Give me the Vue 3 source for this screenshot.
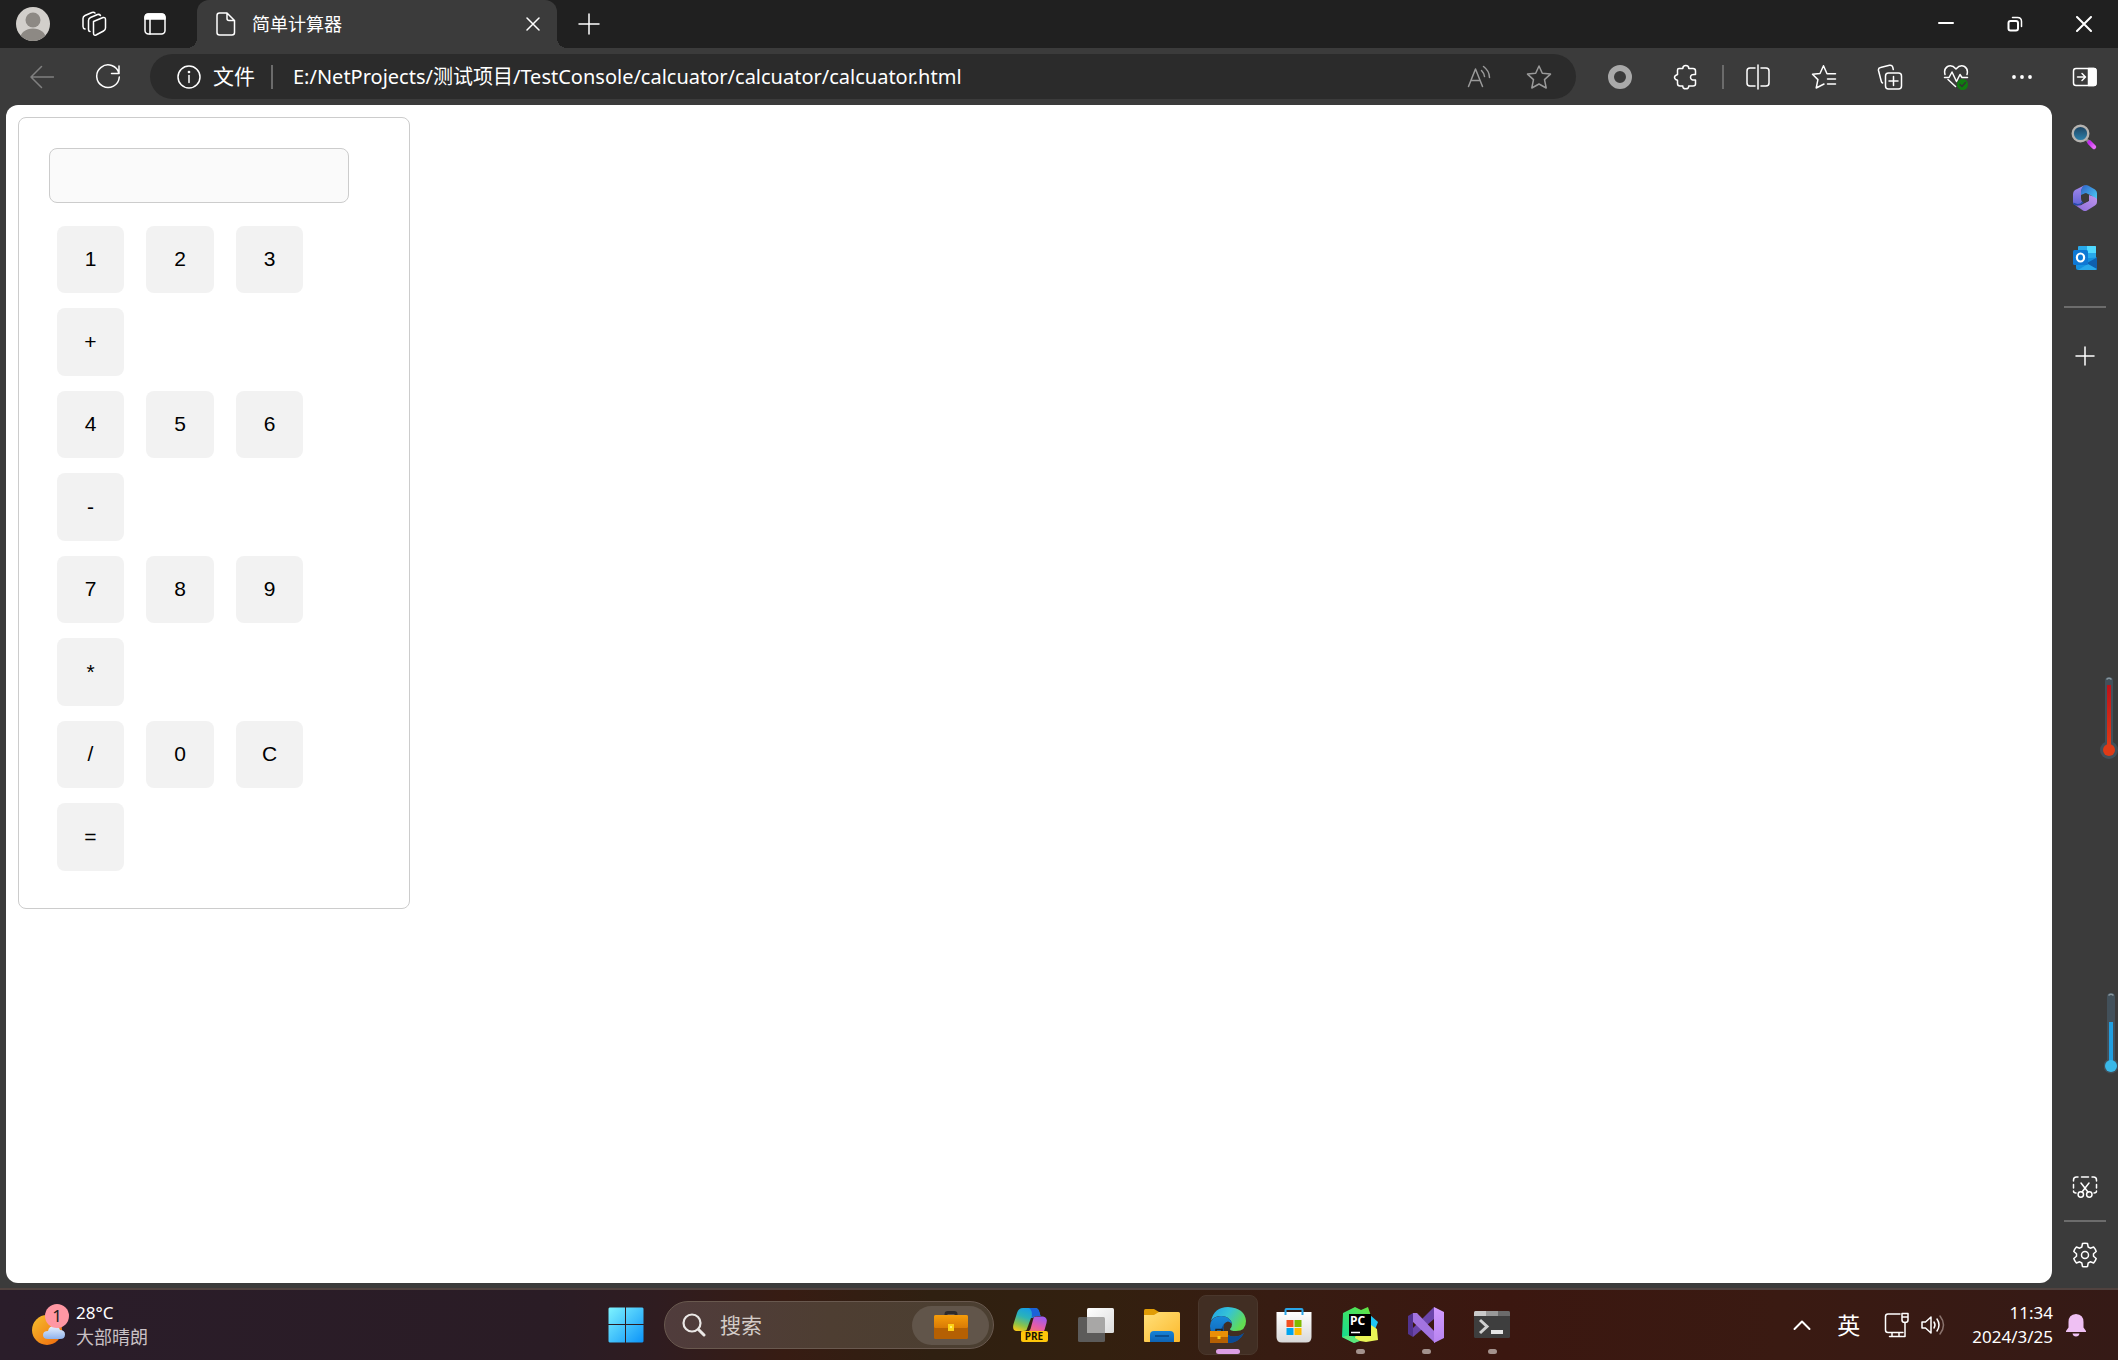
<script setup>
import { ref } from 'vue'

const display = ref('')
const address = ref('E:/NetProjects/测试项目/TestConsole/calcuator/calcuator/calcuator.html')

const rows = [
  ['1', '2', '3'], ['+'],
  ['4', '5', '6'], ['-'],
  ['7', '8', '9'], ['*'],
  ['/', '0', 'C'], ['='],
]

function calculate(text) {
  const match = text.match(/^(-?[\d.]+)([-+*/])(-?[\d.]+)$/)
  if (!match) return text
  const a = Number(match[1])
  const b = Number(match[3])
  return String({ '+': a + b, '-': a - b, '*': a * b, '/': a / b }[match[2]])
}

function press(key) {
  if (key === 'C') display.value = ''
  else if (key === '=') display.value = calculate(display.value)
  else display.value += key
}
</script>

<template>
  <div class="screen">
    <header class="titlebar">
      <div class="title-tools">
        <button class="tool" aria-label="个人资料">
          <svg width="34" height="34" viewBox="0 0 34 34">
            <defs><clipPath id="face"><circle cx="17" cy="17" r="17" /></clipPath></defs>
            <g clip-path="url(#face)"><rect width="34" height="34" fill="#d2cfcb" /><circle cx="17" cy="13" r="7.5" fill="#8d8984" /><ellipse cx="17" cy="32" rx="13" ry="10.500" fill="#8d8984" /></g>
          </svg>
        </button>
        <button class="tool" aria-label="工作区">
          <svg width="26" height="26" viewBox="0 0 26 26" class="line">
            <path d="M12.500 10.500 L22 6.500 Q24.500 6 24.500 8.500 V17 Q24.500 19 22.500 20 L15 24 Q12.500 25 12.500 22 Z" />
            <path d="M9 20.500 Q7.500 20.500 7.500 18 V9.500 Q7.500 7.500 9.500 6.500 L16.500 3.500 Q18.500 3 19.500 4.500" />
            <path d="M4 18 Q2 17.500 2 15.500 V7.500 Q2 5.500 4 4.500 L11 1.500 Q13 1 14 2" />
          </svg>
        </button>
        <button class="tool" aria-label="标签页操作菜单">
          <svg width="24" height="24" viewBox="0 0 24 24" class="line">
            <rect x="2" y="2" width="20" height="20" rx="3.500" /><path d="M2 5.500 Q2 2 5.500 2 H18.500 Q22 2 22 5.500 V7 H2 Z" fill="#fff" /><path d="M7 7 V22" />
          </svg>
        </button>
      </div>
      <div class="tab">
        <svg width="24" height="24" viewBox="0 0 24 24" class="line">
          <path d="M5.500 1 H13 L20.500 8.500 V20.500 Q20.500 23 18 23 H5.500 Q3 23 3 20.500 V3.500 Q3 1 5.500 1 Z M13 1 V6.500 Q13 8.500 15 8.500 H20.500" />
        </svg>
        <span class="tab-title">简单计算器</span>
        <button class="tab-close" aria-label="关闭标签页">
          <svg width="14" height="14" viewBox="0 0 14 14" class="line"><path d="M1 1 L13 13 M13 1 L1 13" /></svg>
        </button>
      </div>
      <button class="tool new-tab" aria-label="新建标签页">
        <svg width="22" height="22" viewBox="0 0 22 22" class="line"><path d="M11 1 V21 M1 11 H21" /></svg>
      </button>
      <div class="window-controls">
        <button aria-label="最小化"><svg width="16" height="16" viewBox="0 0 16 16" class="line bold"><path d="M1 7 H15" /></svg></button>
        <button aria-label="还原">
          <svg width="16" height="16" viewBox="0 0 16 16" class="line bold"><rect x="1.500" y="5" width="9.500" height="9.500" rx="2" /><path d="M5.500 1.500 H10.500 Q14.500 1.500 14.500 5.500 V10.500" stroke-width="1.500" /></svg>
        </button>
        <button aria-label="关闭"><svg width="16" height="16" viewBox="0 0 16 16" class="line bold"><path d="M1 1 L15 15 M15 1 L1 15" /></svg></button>
      </div>
    </header>

    <nav class="toolbar">
      <div class="group">
        <button class="tool dim" aria-label="后退">
          <svg width="24" height="24" viewBox="0 0 24 24" class="line"><path d="M23.500 12 H1 M11.500 1.500 L1 12 L11.500 22.500" /></svg>
        </button>
        <button class="tool" aria-label="刷新">
          <svg width="26" height="26" viewBox="0 0 26 26" class="line"><path d="M24 9.500 A11.300 11.300 0 1 0 24.300 13 M24 2 V9.500 H16.500" /></svg>
        </button>
      </div>
      <div class="address">
        <button class="site-info">
          <svg width="24" height="24" viewBox="0 0 24 24" class="line"><circle cx="12" cy="12" r="11" /><path d="M12 10.500 V17.500" /><circle cx="12" cy="7" r=".6" /></svg>
          <span>文件</span>
        </button>
        <i class="rule"></i>
        <input v-model="address" class="url" type="text" aria-label="地址栏" />
        <button class="tool faded" aria-label="大声朗读">
          <svg width="24" height="24" viewBox="0 0 24 24" class="line"><path d="M1.500 21.500 L8.500 4 L15.500 21.500 M4 15.500 H13 M14.500 5.500 Q17 8 17.500 11.500 M16.500 1.500 Q22.500 6 22.500 12.500" /></svg>
        </button>
        <button class="tool faded" aria-label="收藏此页">
          <svg width="26" height="26" viewBox="0 0 26 26" class="line"><path d="M13 2 L16.300 9.200 L24.500 10.100 L18.500 15.600 L20.200 24 L13 20 L5.800 24 L7.500 15.600 L1.500 10.100 L9.700 9.200 Z" /></svg>
        </button>
      </div>
      <div class="group">
        <button class="tool" aria-label="扩展程序">
          <svg width="24" height="24" viewBox="0 0 24 24"><circle cx="12" cy="12" r="9" fill="none" stroke="#a9a9a9" stroke-width="6" /></svg>
        </button>
        <button class="tool" aria-label="扩展">
          <svg width="26" height="26" viewBox="0 0 26 26" class="line">
            <path d="M6 4.500 H9.800 Q9.800 1.500 12.800 1.500 Q15.800 1.500 15.800 4.500 H20 Q22.500 4.500 22.500 7 V10.500 Q17.500 9.800 17.500 13.300 Q17.500 16.700 22.500 16 V20 Q22.500 22 20 22 H15.700 Q15.900 24.800 12.700 24.800 Q9.600 24.800 9.800 22 H7 Q4.500 22 4.500 19.500 V16.300 Q1.500 15.500 1.500 13.300 Q1.500 11.500 4.500 10.500 V6 Q4.500 4.500 6 4.500 Z" />
          </svg>
        </button>
      </div>
      <i class="rule split"></i>
      <div class="group">
        <button class="tool" aria-label="拆分窗口">
          <svg width="24" height="26" viewBox="0 0 24 26" class="line"><path d="M9 4 H4 Q1 4 1 7 V19 Q1 22 4 22 H9 M15 4 H20 Q23 4 23 7 V19 Q23 22 20 22 H15 M12 1 V25" /></svg>
        </button>
        <button class="tool" aria-label="收藏夹">
          <svg width="26" height="26" viewBox="0 0 26 26" class="line"><path d="M24.500 9.800 H16 L12.500 1.800 L9 9.500 L1.500 10.200 L6.900 15.600 L5.200 24 L13 20 M16.500 15 H24.500 M16.500 20 H24.500" /></svg>
        </button>
        <button class="tool" aria-label="集锦">
          <svg width="26" height="26" viewBox="0 0 26 26" class="line"><rect x="8.500" y="9" width="16" height="16" rx="3" /><path d="M16.500 12.500 V21.500 M12 17 H21 M5.500 19 Q4.500 18.500 4.200 17 L1.500 6.500 Q1 4 3.500 3.500 L12.500 1.200 Q15 .8 15.700 3 L16.300 5.500" /></svg>
        </button>
        <button class="tool" aria-label="浏览器概要">
          <svg width="26" height="26" viewBox="0 0 26 26" class="line">
            <path d="M2 10.500 Q.5 5 4.500 2.500 Q9 .3 13 5 Q17 .3 21.500 2.500 Q25.500 5 24 10.500 M1.500 13.500 H6 L9 8 L13.500 17.500 L17 10.500 L19 13.500 H24.500 M5 15.500 L12.500 22.500" />
            <circle cx="19.500" cy="20.500" r="5.500" fill="#107c10" stroke="none" /><path d="M17 20.500 L19 22.500 L22.500 18.500" stroke="#333" />
          </svg>
        </button>
        <button class="tool" aria-label="设置及其他">
          <svg width="24" height="6" viewBox="0 0 24 6" fill="#fff"><circle cx="4" cy="3" r="1.900" /><circle cx="12" cy="3" r="1.900" /><circle cx="20" cy="3" r="1.900" /></svg>
        </button>
      </div>
      <button class="tool side-toggle" aria-label="边栏">
        <svg width="26" height="20" viewBox="0 0 26 20" class="line"><rect x="1.500" y="1.500" width="22.500" height="17" rx="2.500" /><path d="M16.500 1.500 H22 Q24 1.500 24 4 V16 Q24 18.500 22 18.500 H16.500 Z" fill="#fff" /><path d="M5.500 10 H13 M10 6.500 L13.500 10 L10 13.500" /></svg>
      </button>
    </nav>

    <div class="body">
      <main class="page">
        <form class="calculator" @submit.prevent>
          <input v-model="display" class="display" type="text" aria-label="结果" readonly />
          <div class="keys">
            <template v-for="row in rows" :key="row[0]">
              <button v-for="(key, i) in row" :key="key" type="button" class="key" :class="{ first: i === 0 }" @click="press(key)">{{ key }}</button>
            </template>
          </div>
        </form>
      </main>

      <aside class="sidebar">
        <button aria-label="搜索">
          <svg width="28" height="28" viewBox="0 0 28 28">
            <defs>
              <linearGradient id="lens" x1="0" y1="0" x2="0" y2="1"><stop offset="0" stop-color="#1c3f5c" /><stop offset="1" stop-color="#2f85b0" /></linearGradient>
              <linearGradient id="handle" x1="0" y1="0" x2="1" y2="1"><stop offset="0" stop-color="#c22bf0" /><stop offset="1" stop-color="#e66af8" /></linearGradient>
            </defs>
            <path d="M15 15 L18.500 18.500" stroke="#888" stroke-width="3" /><path d="M18.500 18.500 L23 23" stroke="url(#handle)" stroke-width="4.500" stroke-linecap="round" />
            <circle cx="9.500" cy="9.500" r="7.800" fill="url(#lens)" stroke="#b5b3b0" stroke-width="2.400" />
          </svg>
        </button>
        <button aria-label="Microsoft 365">
          <svg width="26" height="28" viewBox="0 0 26 28">
            <defs>
              <linearGradient id="m1" x1="0" y1="0" x2="0" y2="1"><stop offset="0" stop-color="#a98bee" /><stop offset="1" stop-color="#5d62d4" /></linearGradient>
              <linearGradient id="m2" x1="0" y1="0" x2="1" y2="1"><stop offset="0" stop-color="#2f62c9" /><stop offset="1" stop-color="#4fd5f7" /></linearGradient>
              <linearGradient id="m3" x1="0" y1="1" x2="1" y2="0"><stop offset="0" stop-color="#8a6ad8" /><stop offset="1" stop-color="#c197ee" /></linearGradient>
            </defs>
            <path d="M13 1 L3 6 Q1 7.500 1 10 V18 Q1 20 3 21 L7 22 L10 18 L9 14 V9 Q9 4 13 1 Z" fill="url(#m1)" />
            <path d="M12 1.500 Q14 .5 16 1.500 L23 5.500 Q25 7 25 9 V18 L20 12 L14 9 L9 11 V8 Q9 3.500 12 1.500 Z" fill="url(#m2)" />
            <path d="M25 15 V18 Q25 20.500 23 21.500 L15 26.500 Q13 27.500 11 26.500 L3 21 Q8 22.500 11 20 L17 17 V11 Q20 11.500 23 13.500 Z" fill="url(#m3)" />
            <path d="M1.500 19.500 Q6 22 9.500 19.500 L11 18" fill="none" stroke="#2549a8" stroke-width="1.500" />
            <path d="M9.500 11.500 L13 9.500 L17 11.500 V16.500 L13 18.500 L9.500 16.500 Z" fill="#3b3b3b" />
          </svg>
        </button>
        <button aria-label="Outlook">
          <svg width="26" height="26" viewBox="0 0 26 26">
            <rect x="6" y="1" width="18" height="18" rx="1" fill="#28a8ea" /><path d="M15 1 H23 Q24 1 24 2 V8 H15 Z" fill="#50d9ff" /><path d="M6 7 H15 V13 H6 Z" fill="#0364b8" /><path d="M4 14 L25 12.500 V23 Q25 25 23 25 H6 Q4 25 4 23 Z" fill="#1490df" /><path d="M25 12.500 L14 18.500 L25 25 Z" fill="#0f5fae" /><path d="M16 19 L25 24 Q24 25 23 25 H6 Z" fill="#28a8ea" />
            <rect x="1" y="5" width="15" height="15" rx="1.500" fill="#0f78d4" /><ellipse cx="8.500" cy="12.500" rx="3.600" ry="4" fill="none" stroke="#fff" stroke-width="2.200" />
          </svg>
        </button>
        <hr />
        <button aria-label="自定义边栏"><svg width="20" height="20" viewBox="0 0 20 20" class="line"><path d="M10 1 V19 M1 10 H19" /></svg></button>
        <div class="spacer"></div>
        <button aria-label="屏幕截图">
          <svg width="26" height="24" viewBox="0 0 26 24" class="line">
            <path d="M1.500 6 V5 Q1.500 2 4.500 2 H6 M9.500 2 H16.500 M20 2 H21.500 Q24.500 2 24.500 5 V6 M24.500 9.500 V13 M1.500 9.500 V13 M1.500 16 Q1.500 18 4 18 M24.500 16 Q24.500 18 22 18" />
            <path d="M9 8 L16 17 M17 8 L10 17" /><circle cx="8.800" cy="19.500" r="2.700" /><circle cx="17.300" cy="19.500" r="2.700" />
          </svg>
        </button>
        <hr />
        <button aria-label="设置">
          <svg width="26" height="26" viewBox="0 0 26 26" class="line">
            <path d="M10.500 1.500 Q13 .8 15.500 1.500 L16.200 5 L18.300 6.200 L21.600 5 Q23.500 7 24.200 9.500 L21.500 11.800 V14.200 L24.200 16.500 Q23.500 19 21.600 21 L18.300 19.800 L16.200 21 L15.500 24.500 Q13 25.200 10.500 24.500 L9.800 21 L7.700 19.800 L4.400 21 Q2.500 19 1.800 16.500 L4.500 14.200 V11.800 L1.800 9.500 Q2.500 7 4.400 5 L7.700 6.200 L9.800 5 Z" /><circle cx="13" cy="13" r="3.500" />
          </svg>
        </button>
      </aside>
    </div>

    <footer class="taskbar">
      <button class="weather">
        <svg width="40" height="44" viewBox="0 0 40 44">
          <defs>
            <linearGradient id="sun" x1="0" y1="0" x2="1" y2="1"><stop offset="0" stop-color="#f5c02e" /><stop offset="1" stop-color="#f0660c" /></linearGradient>
            <linearGradient id="cloud" x1="0" y1="0" x2="0" y2="1"><stop offset="0" stop-color="#eaf3ff" /><stop offset="1" stop-color="#8fb2ec" /></linearGradient>
          </defs>
          <circle cx="16" cy="27" r="15" fill="url(#sun)" /><path d="M17 36 Q12 36 12 32 Q12 28 17 28 Q18 23 23 23 Q28 23 29 27 Q34 27 34 31.500 Q34 36 29 36 Z" fill="url(#cloud)" />
          <circle cx="26" cy="13" r="12" fill="#ff97a3" /><text x="26" y="19" text-anchor="middle" class="badge">1</text>
        </svg>
        <span class="stack left"><span>28°C</span><span class="muted">大部晴朗</span></span>
      </button>

      <div class="apps">
        <button class="app" aria-label="开始">
          <svg width="36" height="36" viewBox="0 0 36 36">
            <defs><linearGradient id="win" gradientUnits="userSpaceOnUse" x1="0" y1="0" x2="36" y2="36"><stop offset="0" stop-color="#80f5ff" /><stop offset="1" stop-color="#0a92f8" /></linearGradient></defs>
            <path fill="url(#win)" d="M1.500 .5 H17 V17 H.5 V1.500 Z M18 .5 H34.500 L35.500 1.500 V17 H18 Z M.5 18 H17 V35.500 H1.500 L.5 34.500 Z M18 18 H35.500 V34.500 L34.500 35.500 H18 Z" />
          </svg>
        </button>
        <label class="search">
          <svg width="24" height="24" viewBox="0 0 24 24" fill="none" stroke="#ebe8e6" stroke-linecap="round"><circle cx="10" cy="10" r="8.500" stroke-width="2.200" /><path d="M16.500 16.500 L22 22" stroke-width="3" /></svg>
          <input type="text" placeholder="搜索" aria-label="搜索" />
          <span class="highlight">
            <svg width="34" height="28" viewBox="0 0 34 28">
              <defs><linearGradient id="bag" x1="0" y1="0" x2="0" y2="1"><stop offset="0" stop-color="#f59d0a" /><stop offset="1" stop-color="#d97a05" /></linearGradient></defs>
              <path d="M12 4.500 V3 Q12 1.500 14 1.500 H20 Q22 1.500 22 3 V4.500" fill="none" stroke="#2d2a2a" stroke-width="3" /><rect y="4" width="34" height="24" rx="1.500" fill="#b56003" /><rect y="4" width="34" height="13" rx="1.500" fill="url(#bag)" /><rect x="14" y="13" width="6" height="7" fill="#fcd116" /><rect x="16" y="15" width="2" height="2" fill="#fff06a" />
            </svg>
          </span>
        </label>
        <button class="app" aria-label="Copilot">
          <svg width="36" height="36" viewBox="0 0 36 36">
            <defs>
              <linearGradient id="c1" x1=".6" y1="0" x2=".2" y2="1"><stop offset="0" stop-color="#159be8" /><stop offset=".4" stop-color="#2bb3b8" /><stop offset=".75" stop-color="#8bc34a" /><stop offset="1" stop-color="#f3c719" /></linearGradient>
              <linearGradient id="c2" x1=".8" y1="0" x2=".3" y2="1"><stop offset="0" stop-color="#9b5cf5" /><stop offset=".5" stop-color="#e55ca8" /><stop offset="1" stop-color="#f9854a" /></linearGradient>
            </defs>
            <path d="M11 1 H23 Q26 1 27 4 L28.500 9 H25 Q21 9 20 13 L17 20 Q16 24 11 24 H4 Q0 23 1.500 17 L5 6 Q6.500 1 11 1 Z" fill="url(#c1)" /><path d="M17 1 H23 Q26 1 27 4 L28.500 9 H25 Q21 9 19.500 12 Q21 3 17 1 Z" fill="#1b62d8" />
            <path d="M24 9.500 H31 Q36 10.500 34.500 16 L32.500 23 Q31 28 25 28 H13 Q10 28 9 24.500 H12 Q17 24 18.500 19 L20.500 12 Q21.500 9.500 24 9.500 Z" fill="url(#c2)" />
            <path d="M19 11 L21.500 11 L18.500 22 Q17.500 24.500 14 24.500 Z" fill="#32200f" />
            <rect x="9" y="24" width="27" height="11" rx="2" fill="#ffc60a" /><text x="22" y="33" text-anchor="middle" class="pre">PRE</text>
          </svg>
        </button>
        <button class="app" aria-label="任务视图">
          <svg width="36" height="36" viewBox="0 0 36 36">
            <defs><linearGradient id="tv" x1="0" y1="0" x2="1" y2="1"><stop offset="0" stop-color="#fff" /><stop offset="1" stop-color="#dcdcdc" /></linearGradient></defs>
            <rect y="10" width="27" height="25" rx="1.500" fill="#5c5b5a" /><rect x="9" y="1" width="27" height="25" rx="1.500" fill="url(#tv)" /><path d="M9 10 H25.500 Q27 10 27 11.500 V26 H9 Z" fill="#a8a7a6" />
          </svg>
        </button>
        <button class="app" aria-label="文件资源管理器">
          <svg width="36" height="36" viewBox="0 0 36 36">
            <defs><linearGradient id="fold" x1="0" y1="0" x2="1" y2="1"><stop offset="0" stop-color="#ffe07a" /><stop offset="1" stop-color="#fcb92c" /></linearGradient><linearGradient id="tray" x1="0" y1="0" x2="0" y2="1"><stop offset="0" stop-color="#1683d8" /><stop offset="1" stop-color="#0f63b3" /></linearGradient></defs>
            <path d="M0 3.500 Q0 2 1.500 2 H10 L15 5 V9 H0 Z" fill="#e09c05" /><path d="M0 8 H10 L15 5 H34.500 Q36 5 36 6.500 V34 Q36 35 35 35 H1 Q0 35 0 34 Z" fill="url(#fold)" /><path d="M6 35 V28 Q6 24 10 24 H26 Q30 24 30 28 V35 Z" fill="url(#tray)" /><path d="M11 29 H25" stroke="#084580" stroke-width="1.500" />
          </svg>
        </button>
        <button class="app active" aria-label="Microsoft Edge">
          <svg width="36" height="36" viewBox="0 0 36 36">
            <defs>
              <linearGradient id="e1" x1="0" y1="0" x2="1" y2=".5"><stop offset="0" stop-color="#1f9fe8" /><stop offset=".5" stop-color="#35c3d6" /><stop offset="1" stop-color="#62dc52" /></linearGradient>
              <linearGradient id="e2" x1="0" y1="0" x2="0" y2="1"><stop offset="0" stop-color="#1789d8" /><stop offset="1" stop-color="#0f5cb0" /></linearGradient>
            </defs>
            <path d="M1 14 Q4 0 18 0 Q35 1 36 14 Q36 24 26 24 Q20 24 20 22 Q22 20 22 17 Q20 9 11 9 Q4 9 1 14 Z" fill="url(#e1)" />
            <path d="M0 19 Q1 9 11 9 Q20 9 22 17 Q18 12 14 17 Q11 25 20 29 Q28 31 34 26 Q28 37 16 36 Q1 34 0 19 Z" fill="url(#e2)" /><path d="M14 17 Q11 25 20 29 Q28 31 34 26 Q29 36 18 36 Q6 27 14 17 Z" fill="#0b4a93" />
            <path d="M6 24 V22.500 H12 V24" fill="none" stroke="#222" stroke-width="1.500" /><rect y="24" width="18" height="12" fill="#b56003" /><rect y="24" width="18" height="6" fill="#ea8f08" /><rect x="7.500" y="29" width="3" height="3" fill="#fcd116" />
          </svg>
          <i class="mark"></i>
        </button>
        <button class="app" aria-label="Microsoft Store">
          <svg width="36" height="36" viewBox="0 0 36 36">
            <defs><linearGradient id="store" x1="0" y1="0" x2="0" y2="1"><stop offset="0" stop-color="#fff" /><stop offset="1" stop-color="#d9d9d9" /></linearGradient></defs>
            <path d="M.5 5 H35.500 V30 Q35.500 35.500 30 35.500 H6 Q.5 35.500 .5 30 Z" fill="url(#store)" /><path d="M9.500 8 V3 Q9.500 2 10.500 2 H25.500 Q26.500 2 26.500 3 V8" fill="none" stroke="#2aa5e8" stroke-width="2" />
            <path d="M10.500 13 H17.500 V20 H10.500 Z" fill="#f25022" /><path d="M18.500 13 H25.500 V20 H18.500 Z" fill="#7fba00" /><path d="M10.500 21 H17.500 V28 H10.500 Z" fill="#00a4ef" /><path d="M18.500 21 H25.500 V28 H18.500 Z" fill="#ffb900" />
          </svg>
        </button>
        <button class="app running" aria-label="PyCharm">
          <svg width="36" height="36" viewBox="0 0 36 36">
            <defs><linearGradient id="pc" x1="1" y1="0" x2="0" y2="1"><stop offset="0" stop-color="#6be43c" /><stop offset="1" stop-color="#0bdc9a" /></linearGradient></defs>
            <path d="M1 6 L13 0 L19 3 L26 0 L30 12 L26 30 L12 36 L0 30 Z" fill="url(#pc)" /><path d="M28 8 L36 15 L32 25 L26 20 Z" fill="#1fc8f5" /><path d="M29 18 L35 22 L36 33 L24 35 L12 33 L14 28 Z" fill="#e9f455" /><path d="M0 30 L8 28 L18 34 L12 36 Z" fill="#5be67a" /><rect x="7" y="7" width="22" height="22" fill="#000" /><path d="M9 25.500 H18" stroke="#fff" stroke-width="1.500" /><text x="8" y="18" class="pc">PC</text>
          </svg>
          <i class="mark"></i>
        </button>
        <button class="app running" aria-label="Visual Studio">
          <svg width="36" height="36" viewBox="0 0 36 36">
            <defs><linearGradient id="vs" x1="0" y1="0" x2="0" y2="1"><stop offset="0" stop-color="#d29cff" /><stop offset="1" stop-color="#b884f0" /></linearGradient></defs>
            <path d="M0 9 L5 6 V30 L0 27 Z" fill="#52338f" /><path d="M5 30 V21 L26 0 V12 Z" fill="#6b45ab" /><path d="M5 6 L9 6 L27 25 V36 L5 15 Z" fill="#a374e0" /><path d="M26 0 L36 5 V31 L26 36 Z" fill="url(#vs)" />
          </svg>
          <i class="mark"></i>
        </button>
        <button class="app running" aria-label="终端">
          <svg width="36" height="36" viewBox="0 0 36 36">
            <rect y="4" width="36" height="27" rx="1.500" fill="#3e3e3e" /><path d="M0 5.500 Q0 4 1.500 4 H12 V9 H0 Z" fill="#c9c9c9" /><path d="M12 4 H24 V9 H12 Z" fill="#999" /><path d="M24 4 H34.500 Q36 4 36 5.500 V9 H24 Z" fill="#6b6b6b" /><path d="M6 13 L13 19.500 L6 26" fill="none" stroke="#d0d0d0" stroke-width="3" /><path d="M17 25 H29" stroke="#e5e5e5" stroke-width="4" />
          </svg>
          <i class="mark"></i>
        </button>
      </div>

      <div class="tray">
        <button class="tray-item" aria-label="显示隐藏的图标"><svg width="18" height="12" viewBox="0 0 18 12" class="line bold"><path d="M1.500 10 L9 2.500 L16.500 10" /></svg></button>
        <button class="tray-item ime">英</button>
        <button class="tray-item status" aria-label="网络和音量">
          <svg width="26" height="26" viewBox="0 0 26 26" class="line"><path d="M16 2 H4 Q1.500 2 1.500 4.500 V18 Q1.500 20.500 4 20.500 H19 M8 20.500 V24 M15 20.500 V24 M5.500 24.500 H18 M21 10.500 V24.500 H19" /><path d="M18 1.500 H24 V8 Q24 10.500 21 10.500 Q18 10.500 18 8 Z M18 5 H24" /></svg>
          <svg width="26" height="24" viewBox="0 0 26 24" class="line"><path d="M2 9 H5.500 L11 4 V20 L5.500 15 H2 Z M14 9 Q16 12 14 15 M17 6 Q21 12 17 18" /><path d="M20 3 Q27 12 20 21" stroke="#8a736d" /></svg>
        </button>
        <button class="stack clock"><span>11:34</span><span>2024/3/25</span></button>
        <button class="bell" aria-label="通知">
          <svg width="20" height="24" viewBox="0 0 20 24" fill="#efc0f3"><path d="M10 1 Q17.500 1.500 17.500 9 V14.500 L20 18 V19 H0 V18 L2.500 14.500 V9 Q2.500 1.500 10 1 Z M6.500 20.500 H13.500 Q13 23.500 10 23.500 Q7 23.500 6.500 20.500 Z" /></svg>
        </button>
      </div>
    </footer>

    <svg class="gauge hot" width="18" height="84" viewBox="0 0 18 84">
      <defs><linearGradient id="hot" x1="0" y1="0" x2="0" y2="1"><stop offset="0" stop-color="#bd1219" /><stop offset="1" stop-color="#e03a16" /></linearGradient></defs>
      <rect x="5" y="1" width="8" height="76" rx="4" fill="#42505a" /><circle cx="9" cy="74" r="9" fill="#42505a" /><path d="M6.500 3.500 Q9 1 11.500 3.500" fill="none" stroke="#87949c" stroke-width="1.500" /><rect x="7" y="9" width="4" height="62" fill="url(#hot)" /><circle cx="9" cy="74" r="6" fill="#df3b17" />
    </svg>
    <svg class="gauge cold" width="14" height="84" viewBox="0 0 14 84">
      <rect x="3" y="1" width="8" height="76" rx="4" fill="#42505a" /><circle cx="7" cy="74" r="7.500" fill="#42505a" /><path d="M4.500 3.500 Q7 1 9.500 3.500" fill="none" stroke="#87949c" stroke-width="1.500" /><rect x="5" y="30" width="4" height="42" fill="#219fe0" /><circle cx="7" cy="74" r="6" fill="#39b8e8" />
    </svg>
  </div>
</template>

<style>
body { background: #3b3b3b; }
</style>

<style scoped>
.screen {
  position: relative;
  display: flex;
  flex-direction: column;
  min-height: 100vh;
  overflow: hidden;
  background: #3b3b3b;
  color: #fff;
  font-family: "Noto Sans", "Noto Sans CJK SC", sans-serif;
  font-size: 17px;
}
* { box-sizing: border-box; }
button, input { margin: 0; padding: 0; border: 0; background: none; color: inherit; font: inherit; outline: none; }
button { display: flex; align-items: center; justify-content: center; }
svg { display: block; flex: none; }
.line { fill: none; stroke: currentColor; stroke-width: 1.5; stroke-linecap: round; stroke-linejoin: round; }
.bold { stroke-width: 2; }
.tool { flex: none; width: 48px; height: 36px; }

.titlebar { display: flex; align-items: stretch; height: 48px; padding-left: 9px; background: #202020; }
.title-tools { display: flex; align-items: center; gap: 13px; }
.tab { position: relative; display: flex; align-items: center; gap: 14px; width: 360px; margin-left: 18px; padding: 0 10px 0 17px; border-radius: 12px 12px 0 0; background: #3b3b3b; }
.tab::before, .tab::after { content: ""; position: absolute; bottom: 0; width: 10px; height: 10px; }
.tab::before { right: 100%; background: radial-gradient(circle at 0 0, transparent 10px, #3b3b3b 10px); }
.tab::after { left: 100%; background: radial-gradient(circle at 100% 0, transparent 10px, #3b3b3b 10px); }
.tab-title { flex: 1; padding-bottom: 2px; font-family: "Noto Sans CJK SC", sans-serif; font-size: 18px; line-height: 24px; }
.tab-close { width: 28px; height: 28px; }
.new-tab { align-self: center; margin-left: 8px; }
.window-controls { display: flex; margin-left: auto; }
.window-controls button { width: 69px; }

.toolbar { display: flex; align-items: center; height: 57px; padding: 0 9px 0 18px; }
.group { display: flex; gap: 18px; }
.dim { color: #808080; }
.faded { color: #9a9a9a; }
.address { display: flex; align-items: center; flex: 1; height: 45px; margin: 0 20px 0 18px; padding: 0 13px 0 27px; border-radius: 23px; background: #2b2b2b; }
.site-info { gap: 12px; font-size: 21px; line-height: 28px; }
.site-info span { padding-bottom: 2px; }
.rule { width: 2px; height: 24px; background: #6b6b6b; }
.address .rule { margin: 0 20px 0 16px; }
.url { flex: 1; min-width: 0; height: 36px; padding-bottom: 2px; font-size: 20px; }
.address .tool + .tool { margin-left: 12px; }
.split { margin: 0 10px 0 12px; }
.side-toggle { margin-left: 15px; }

.body { display: flex; flex: 1; }
.page { flex: 1; margin: 0 0 5px 6px; padding: 12px; border-radius: 12px; background: #fff; color: #000; }
.calculator { width: 392px; padding: 30px 30px 37px; border: 1px solid #ccc; border-radius: 8px; }
.display { display: block; width: 300px; height: 55px; padding: 0 15px; border: 1px solid #ccc; border-radius: 8px; background: #fafafa; font: 21px "Liberation Sans", sans-serif; text-align: right; }
.keys { display: grid; grid-template-columns: 67px 68px 67px; grid-auto-rows: 67px 68px; gap: 15px 22px; margin: 23px 0 0 8px; }
.key { padding-bottom: 1px; border-radius: 8px; background: #f2f2f2; font: 21px "Liberation Sans", sans-serif; }
.first { grid-column: 1; }

.sidebar { display: flex; flex-direction: column; align-items: center; width: 66px; padding: 3px 0; }
.sidebar button { width: 48px; height: 60px; }
.sidebar hr { width: 42px; height: 2px; margin: 18px 0; border: 0; background: #6c6c6c; }
.spacer { flex: 1; }
.spacer ~ hr { margin: 3px 0; }

.taskbar {
  display: grid;
  grid-template-columns: 1fr auto 1fr;
  align-items: center;
  height: 72px;
  border-top: 2px solid #51423f;
  background: linear-gradient(90deg, #2a1d2a 0%, #2a1c25 26%, #2f1c20 31%, #371c13 37%, #2f2011 44%, #33200f 52%, #371c12 60%, #3b1710 71%, #3a1a12 84%, #351a16 100%);
}
.weather { justify-self: start; gap: 5px; height: 60px; padding-left: 31px; }
.stack { display: flex; flex-direction: column; align-items: flex-end; font-size: 17px; line-height: 24px; }
.left { align-items: flex-start; }
.muted { color: #c9c0c4; font-size: 18px; }
.badge { font-size: 17px; fill: #222; }
.apps { display: flex; align-items: center; gap: 6px; }
.app { position: relative; width: 60px; height: 60px; border-radius: 8px; }
.active { border: 1px solid #4a372c; background: #412e23; }
.mark { position: absolute; bottom: 1px; left: 50%; width: 9px; height: 5px; margin-left: -4px; border-radius: 3px; background: #a3928d; }
.active .mark { bottom: 0; width: 24px; margin-left: -12px; background: #dc9ee4; }
.search { display: flex; align-items: center; width: 330px; height: 48px; margin-left: 2px; padding: 0 4px 0 17px; border: 1px solid #69594f; border-radius: 24px; background: linear-gradient(90deg, #503c3c, #4e3e32 50%, #4b3f31); }
.search input { flex: 1; min-width: 0; height: 36px; margin-left: 14px; font-size: 21px; }
.search input::placeholder { color: #d4ccc8; opacity: 1; }
.highlight { display: flex; align-items: center; justify-content: center; width: 77px; height: 39px; border-radius: 20px; background: #61554a; }
.pre { font: bold 10px "Noto Sans", sans-serif; fill: #1c1500; }
.pc { font: bold 12px "Noto Sans", sans-serif; fill: #fff; }
.tray { display: flex; align-items: center; justify-self: end; padding-right: 32px; }
.tray-item { height: 48px; }
.ime { margin-left: 26px; padding-bottom: 2px; font-size: 23px; }
.status { gap: 10px; margin-left: 24px; }
.clock { margin-left: 26px; }
.bell { margin-left: 13px; height: 48px; }

.gauge { position: absolute; }
.hot { top: 676px; right: 0; }
.cold { top: 992px; right: 0; }
</style>
